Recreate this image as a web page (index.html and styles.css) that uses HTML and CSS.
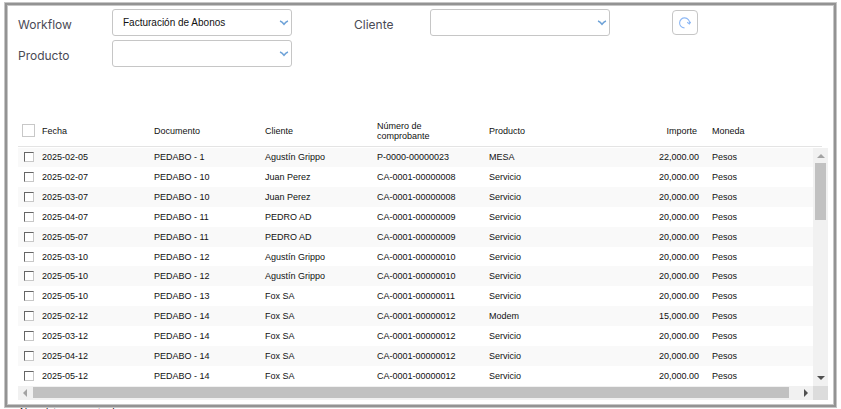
FILE: index.html
```html
<!DOCTYPE html>
<html lang="es">
<head>
  <meta charset="UTF-8">
  <meta name="viewport" content="width=device-width, initial-scale=1.0">
  <title>Facturación de Abonos</title>
  <link rel="stylesheet" href="styles.css">
</head>
<body>

  <div class="panel">
    <!-- Filters -->
    <form class="filters">
      <label for="workflow">Workflow</label>
      <div class="select-box">
        <select id="workflow"><option>Facturación de Abonos</option></select>
        <svg class="chevron" viewBox="0 0 10 6"><path d="M1 1 Q3 1.6 5 4.2 Q7 1.6 9 1"/></svg>
      </div>
      <label for="cliente" class="second">Cliente</label>
      <div class="select-box">
        <select id="cliente"><option></option></select>
        <svg class="chevron" viewBox="0 0 10 6"><path d="M1 1 Q3 1.6 5 4.2 Q7 1.6 9 1"/></svg>
      </div>
      <button type="button" class="refresh" aria-label="Actualizar">
        <svg viewBox="0 0 12 12"><path d="M5.5 10.9 A5 5 0 1 1 10.6 6.2 M8.2 5.2 L10.4 7 L11.8 4.8"/></svg>
      </button>
      <label for="producto">Producto</label>
      <div class="select-box">
        <select id="producto"><option></option></select>
        <svg class="chevron" viewBox="0 0 10 6"><path d="M1 1 Q3 1.6 5 4.2 Q7 1.6 9 1"/></svg>
      </div>
    </form>

    <!-- Grid -->
    <div class="grid">
      <table class="grid-head">
        <colgroup><col class="c-check"><col class="c-a"><col class="c-b"><col class="c-a"><col class="c-a"><col class="c-b"><col class="c-a"><col></colgroup>
        <thead>
          <tr>
            <th><input type="checkbox" class="check-all" aria-label="Todos"></th>
            <th>Fecha</th>
            <th>Documento</th>
            <th>Cliente</th>
            <th>Número de comprobante</th>
            <th>Producto</th>
            <th class="num">Importe</th>
            <th>Moneda</th>
          </tr>
        </thead>
      </table>
      <div class="grid-body">
        <table class="rows">
          <colgroup><col class="c-check"><col class="c-a"><col class="c-b"><col class="c-a"><col class="c-a"><col class="c-b"><col class="c-a"><col></colgroup>
          <tbody id="rows"></tbody>
        </table>
        <div class="vbar">
          <i class="arrow up"></i>
          <div class="thumb"></div>
          <i class="arrow down"></i>
        </div>
        <div class="hbar">
          <i class="arrow left"></i>
          <div class="thumb"></div>
          <i class="arrow right"></i>
        </div>
        <div class="corner"></div>
      </div>
    </div>
  </div>
  <p class="hint">No existe un monto de</p>

  <script>
    const rows = [
      ['2025-02-05', 'PEDABO - 1', 'Agustín Grippo', 'P-0000-00000023', 'MESA', '22,000.00'],
      ['2025-02-07', 'PEDABO - 10', 'Juan Perez', 'CA-0001-00000008', 'Servicio', '20,000.00'],
      ['2025-03-07', 'PEDABO - 10', 'Juan Perez', 'CA-0001-00000008', 'Servicio', '20,000.00'],
      ['2025-04-07', 'PEDABO - 11', 'PEDRO AD', 'CA-0001-00000009', 'Servicio', '20,000.00'],
      ['2025-05-07', 'PEDABO - 11', 'PEDRO AD', 'CA-0001-00000009', 'Servicio', '20,000.00'],
      ['2025-03-10', 'PEDABO - 12', 'Agustín Grippo', 'CA-0001-00000010', 'Servicio', '20,000.00'],
      ['2025-05-10', 'PEDABO - 12', 'Agustín Grippo', 'CA-0001-00000010', 'Servicio', '20,000.00'],
      ['2025-05-10', 'PEDABO - 13', 'Fox SA', 'CA-0001-00000011', 'Servicio', '20,000.00'],
      ['2025-02-12', 'PEDABO - 14', 'Fox SA', 'CA-0001-00000012', 'Modem', '15,000.00'],
      ['2025-03-12', 'PEDABO - 14', 'Fox SA', 'CA-0001-00000012', 'Servicio', '20,000.00'],
      ['2025-04-12', 'PEDABO - 14', 'Fox SA', 'CA-0001-00000012', 'Servicio', '20,000.00'],
      ['2025-05-12', 'PEDABO - 14', 'Fox SA', 'CA-0001-00000012', 'Servicio', '20,000.00']
    ];

    document.getElementById('rows').innerHTML = rows.map(r => `
      <tr>
        <td><input type="checkbox" class="check" aria-label="${r[1]} ${r[0]}"></td>
        <td>${r[0]}</td>
        <td>${r[1]}</td>
        <td>${r[2]}</td>
        <td>${r[3]}</td>
        <td>${r[4]}</td>
        <td class="num">${r[5]}</td>
        <td>Pesos</td>
      </tr>`).join('');
  </script>

</body>
</html>
```
FILE: styles.css
```css
* {
  box-sizing: border-box;
}

body {
  margin: 0;
  padding: 2px 4px 0;
  background-color: #fff;
  color: #111;
  font-family: "Liberation Sans", Arial, sans-serif;
  font-size: 9px;
  overflow: hidden;
}

/* Double grey frame */
.panel {
  border: 1px solid #c6c6c6;
  box-shadow: inset 0 0 0 2px #939393, inset 0 0 0 3px #c6c6c6;
  padding: 6px 8px 7px 13px;
}

/* Filters */
.filters {
  display: grid;
  grid-template-columns: 94px 180px 138px 180px auto;
  grid-auto-rows: 27px;
  row-gap: 4px;
  align-items: center;
  justify-content: start;
}

.filters label {
  padding-top: 3px;
  font-family: Inter, sans-serif;
  font-size: 12px;
  color: #4a4a55;
}

.filters .second {
  padding-left: 62px;
}

.select-box {
  position: relative;
  height: 27px;
}

select {
  appearance: none;
  width: 100%;
  height: 100%;
  padding: 0 20px 0 10px;
  border: 1px solid #c6c6c6;
  border-radius: 3px;
  background-color: #fff;
  color: #111;
  font-family: inherit;
  font-size: 10px;
}

.chevron {
  position: absolute;
  right: 3px;
  top: 11px;
  width: 10px;
  height: 6px;
  pointer-events: none;
}

.chevron path {
  fill: none;
  stroke: #6fa3d8;
  stroke-width: 1.6;
}

.refresh {
  display: flex;
  align-items: center;
  justify-content: center;
  width: 26px;
  height: 25px;
  margin-left: 62px;
  padding: 0;
  border: 1px solid #c6c6c6;
  border-radius: 4px;
  background-color: #fff;
}

.refresh svg {
  width: 12px;
  height: 12px;
}

.refresh path {
  fill: none;
  stroke: #8db8f5;
  stroke-width: 1.1;
}

/* Grid */
.grid {
  margin-top: 49px;
}

table {
  table-layout: fixed;
  border-collapse: collapse;
  width: 100%;
}

.c-check {
  width: 24px;
}

.c-a {
  width: 112px;
}

.c-b {
  width: 111px;
}

th, td {
  padding: 0;
  text-align: left;
  font-weight: normal;
  line-height: 10px;
  vertical-align: middle;
}

th:nth-child(5) {
  padding-right: 50px;
}

.num {
  text-align: right;
  padding-right: 13px;
}

th.num {
  padding-right: 15px;
}

.grid-head {
  width: calc(100% - 6px);
}

.grid-head th {
  height: 30px;
  border-bottom: 1px solid #e4e4e4;
}

.grid-body {
  display: grid;
  grid-template-columns: 1fr 15px;
  margin-top: 1px;
}

.rows {
  height: 238px;
}

.rows tr:nth-child(odd) {
  background-color: #f9f9f9;
}

input[type="checkbox"] {
  appearance: none;
  display: block;
  margin: 0 0 0 6px;
  width: 10px;
  height: 10px;
  background-color: #fff;
  border: 1px solid #c8c8c8;
  border-top-color: #666;
  border-left-color: #666;
}

input.check-all {
  width: 13px;
  height: 13px;
  margin-left: 4px;
  border-color: #c8c8c8;
}

/* Scrollbars */
.vbar, .hbar {
  display: flex;
  align-items: center;
  background-color: #f1f1f1;
}

.vbar {
  flex-direction: column;
  padding: 6px 0;
}

.vbar .thumb {
  width: 11px;
  height: 57px;
  margin: 5px 0 auto;
  background-color: #c1c1c1;
}

.hbar {
  height: 14px;
  padding: 0 5px;
}

.hbar .thumb {
  flex: 1;
  height: 11px;
  margin: 0 15px 0 6px;
  background-color: #c1c1c1;
}

.corner {
  background-color: #dcdcdc;
}

.arrow {
  border: 4px solid transparent;
}

.arrow.up {
  border-top: 0;
  border-bottom-color: #a3a3a3;
}

.arrow.down {
  border-bottom: 0;
  border-top-color: #505050;
}

.arrow.left {
  border-left: 0;
  border-right-color: #a3a3a3;
}

.arrow.right {
  border-right: 0;
  border-left-color: #505050;
}

.hint {
  margin: 0 0 0 16px;
  line-height: 10px;
  font-size: 10px;
}
```
